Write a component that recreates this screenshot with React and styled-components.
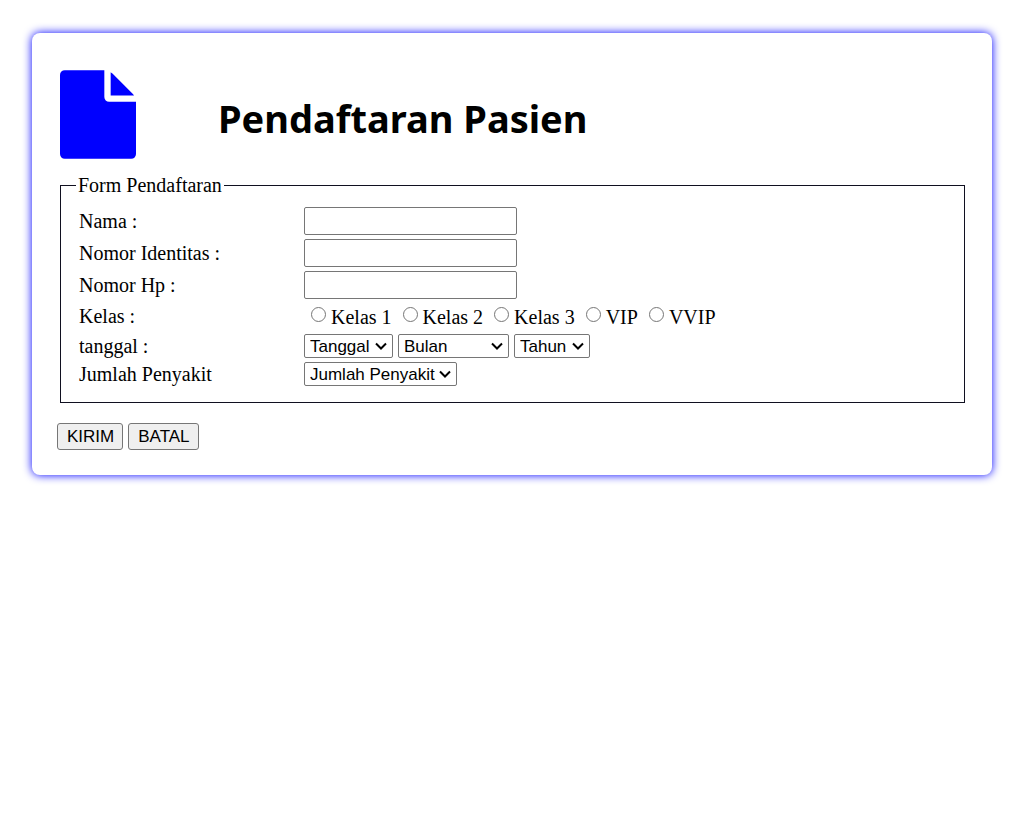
import React from "react";
import styled, { createGlobalStyle } from "styled-components";

const GlobalStyle = createGlobalStyle`
  *, *::before, *::after { box-sizing: border-box; }
  body {
    margin: 0;
    background: #fff;
    color: #000;
    font: 20px/23px "Times New Roman", "Liberation Serif", serif;
  }
`;

const Card = styled.main`
  margin: 33px 33px 33px 32px;
  padding: 37px 24px 25px 25px;
  border-radius: 8px;
  background: #fff;
  box-shadow: 0 0 10px blue;
`;

const Header = styled.header`
  display: flex;
  align-items: center;
  gap: 82px;
  padding-left: 3px;
`;

const FileIcon = styled.svg`
  flex: none;
  display: block;
  width: 76px;
  height: 89px;
  fill: blue;
`;

const Title = styled.h1`
  margin: 6px 0 0;
  font: bold 38px/56px "Comic Sans MS", "Noto Sans", sans-serif;
`;

const Fieldset = styled.fieldset`
  margin: 14px 3px 0;
  padding: 9px 15px 16px;
  border: 1px solid #101020;
  min-width: 0;
`;

const Legend = styled.legend`
  padding: 0 2px;
  line-height: 25px;
`;

const Grid = styled.div`
  display: grid;
  grid-template-columns: 225px 1fr;
  row-gap: 4px;
  align-items: center;
  padding-left: 3px;
`;

const Label = styled.label`
  display: block;
`;

const TextInput = styled.input`
  display: block;
  width: 213px;
  max-width: 100%;
  height: 28px;
  padding: 1px 3px;
  border: 1px solid #767676;
  border-radius: 2px;
  background: #fff;
  font: 17px "Liberation Sans", Arial, sans-serif;
`;

const Radios = styled.div`
  display: flex;
  flex-wrap: wrap;
  gap: 0 11px;
  padding: 3px 0 1px 7px;
`;

const RadioLabel = styled.label`
  display: flex;
  align-items: flex-start;
  gap: 5px;
`;

const Radio = styled.input`
  appearance: none;
  width: 15px;
  height: 15px;
  margin: 1px 0 0;
  border: 1px solid #767676;
  border-radius: 50%;
  background: #fff;
  &:checked { border-color: #0075ff; background: #0075ff; box-shadow: inset 0 0 0 3px #fff; }
`;

const Selects = styled.div`
  display: flex;
  flex-wrap: wrap;
  gap: 5px;
`;

const SelectWrap = styled.span`
  display: grid;
  align-items: center;
  width: ${(p) => p.$width}px;
  > * { grid-area: 1 / 1; }
`;

const Select = styled.select`
  appearance: none;
  width: 100%;
  height: 24px;
  padding: 0 0 0 5px;
  border: 1px solid #767676;
  border-radius: 2px;
  background: #fff;
  color: #000;
  font: 17px "Liberation Sans", Arial, sans-serif;
`;

const Chevron = styled.svg`
  justify-self: end;
  width: 12px;
  height: 8px;
  margin-right: 6px;
  fill: none;
  stroke: #000;
  stroke-width: 2;
  pointer-events: none;
`;

const Actions = styled.div`
  display: flex;
  gap: 5px;
  margin-top: 20px;
`;

const Button = styled.button`
  height: 27px;
  padding: 0 8px 0 9px;
  border: 1px solid #767676;
  border-radius: 3px;
  background: #efefef;
  color: #000;
  font: 17px "Liberation Sans", Arial, sans-serif;
`;

const textFields = [
  { id: "nama", label: "Nama :" },
  { id: "identitas", label: "Nomor Identitas :" },
  { id: "hp", label: "Nomor Hp :" },
];
const classes = ["Kelas 1", "Kelas 2", "Kelas 3", "VIP", "VVIP"];

function Dropdown({ id, text, width }) {
  return (
    <SelectWrap $width={width}>
      <Select id={id} name={id} aria-label={text}>
        <option>{text}</option>
      </Select>
      <Chevron viewBox="0 0 12 8" aria-hidden="true">
        <path d="M1 1.5 6 6.5 11 1.5" />
      </Chevron>
    </SelectWrap>
  );
}

export default function App() {
  return (
    <>
      <GlobalStyle />
      <Card>
        <Header>
          <FileIcon viewBox="128 0 1536 1792" aria-hidden="true">
            <path d="M1152 512v-472q22 14 36 28l408 408q14 14 28 36h-472zm-128 32q0 40 28 68t68 28h544v1056q0 40-28 68t-68 28h-1344q-40 0-68-28t-28-68v-1600q0-40 28-68t68-28h800v544z" />
          </FileIcon>
          <Title>Pendaftaran Pasien</Title>
        </Header>
        <form onSubmit={(e) => e.preventDefault()}>
          <Fieldset>
            <Legend>Form Pendaftaran</Legend>
            <Grid>
              {textFields.map((f) => (
                <React.Fragment key={f.id}>
                  <Label htmlFor={f.id}>{f.label}</Label>
                  <TextInput id={f.id} name={f.id} type="text" />
                </React.Fragment>
              ))}
              <span id="kelas">Kelas :</span>
              <Radios role="radiogroup" aria-labelledby="kelas">
                {classes.map((c) => (
                  <RadioLabel key={c}>
                    <Radio type="radio" name="kelas" value={c} />
                    {c}
                  </RadioLabel>
                ))}
              </Radios>
              <Label htmlFor="tanggal">tanggal :</Label>
              <Selects>
                <Dropdown id="tanggal" text="Tanggal" width={89} />
                <Dropdown id="bulan" text="Bulan" width={111} />
                <Dropdown id="tahun" text="Tahun" width={76} />
              </Selects>
              <Label htmlFor="jumlah">Jumlah Penyakit</Label>
              <Dropdown id="jumlah" text="Jumlah Penyakit" width={153} />
            </Grid>
          </Fieldset>
          <Actions>
            <Button type="submit">KIRIM</Button>
            <Button type="reset">BATAL</Button>
          </Actions>
        </form>
      </Card>
    </>
  );
}
